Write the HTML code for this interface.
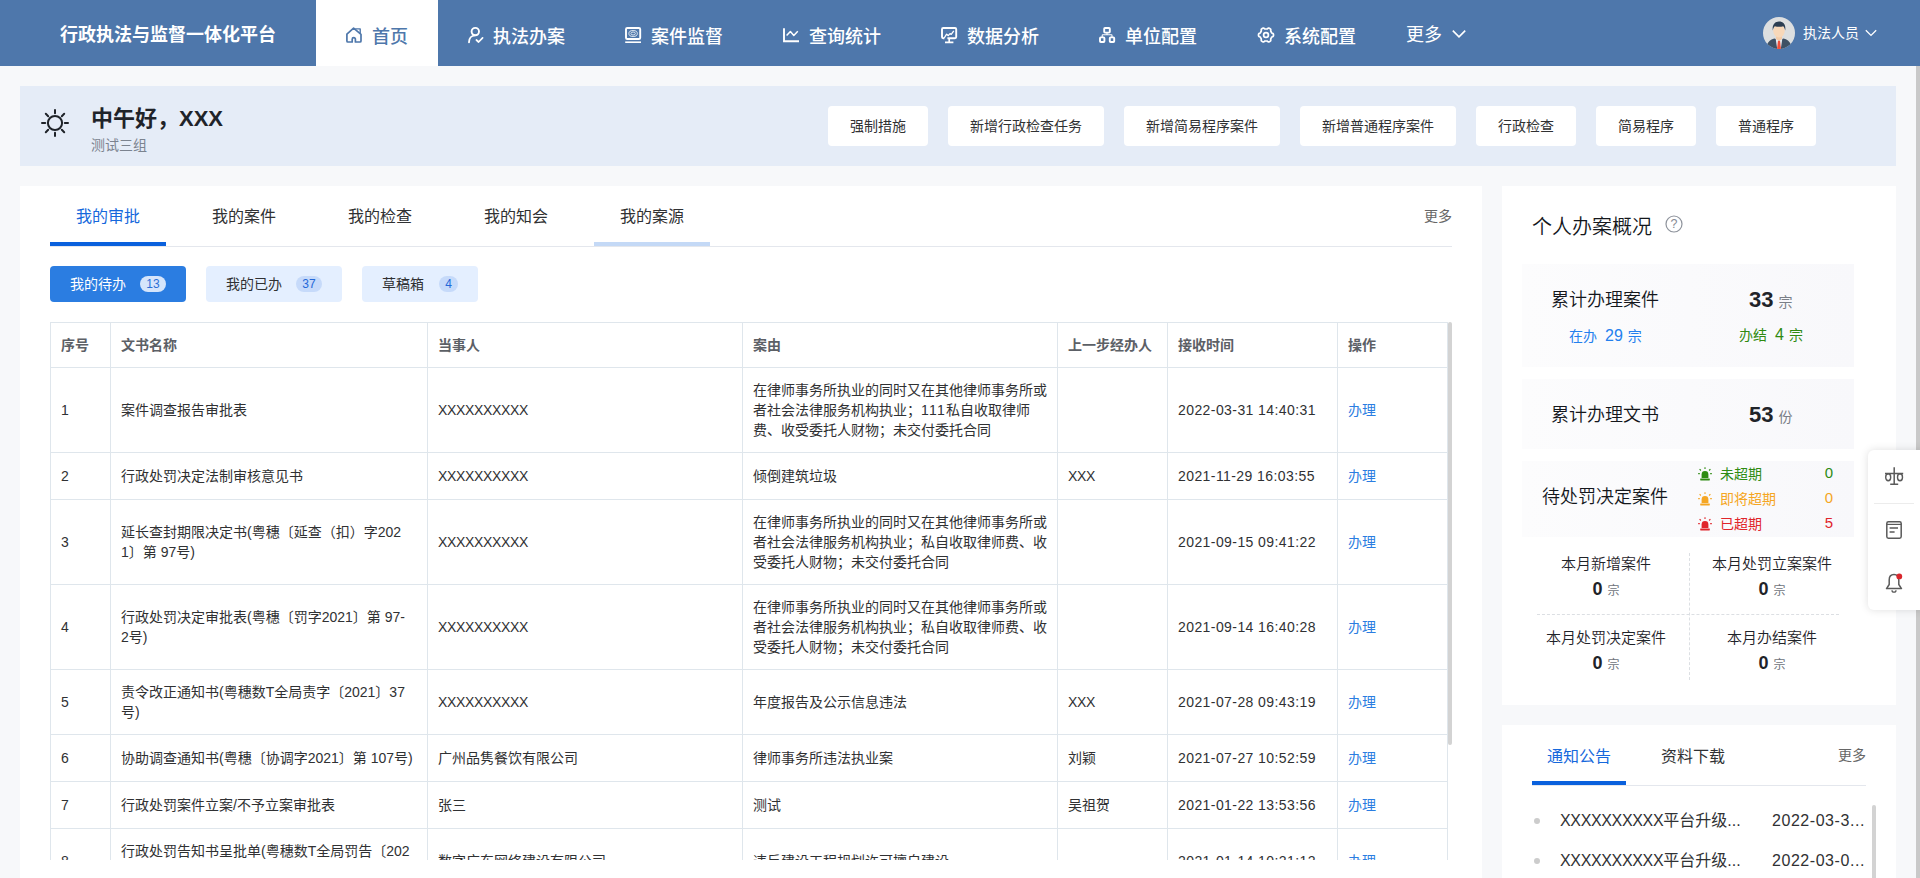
<!DOCTYPE html>
<html lang="zh-CN">
<head>
<meta charset="utf-8">
<title>行政执法与监督一体化平台</title>
<style>
*{box-sizing:border-box;margin:0;padding:0}
html,body{width:1920px;height:878px;overflow:hidden}
body{position:relative;background:#f7f8fa;font-family:"Liberation Sans","Noto Sans CJK SC",sans-serif;color:#303133;font-size:14px}
.abs{position:absolute}
/* header */
#hd{position:absolute;left:0;top:0;width:1920px;height:66px;background:#4e77ab}
#logo{position:absolute;left:60px;top:0;height:66px;line-height:71px;font-size:18px;font-weight:bold;color:#fff;white-space:nowrap}
.nav{position:absolute;top:0;height:66px;line-height:74px;font-size:18px;font-weight:500;color:#fff;white-space:nowrap}
.nav svg{position:absolute;top:27px;width:16px;height:16px;overflow:visible}
.nav.on{background:#fff;color:#4e77ab}
.nav span{position:absolute;top:0}
/* greeting */
#gr{position:absolute;left:20px;top:86px;width:1876px;height:80px;background:#e5ecf7}
#gr h1{position:absolute;left:71px;top:18px;font-size:22px;line-height:30px;font-weight:bold;color:#1f2329;white-space:nowrap}
#gr p{position:absolute;left:71px;top:50px;font-size:14px;line-height:18px;color:#7b838f}
.qb{position:absolute;top:20px;height:40px;line-height:40px;background:#fff;border-radius:4px;text-align:center;font-size:14px;color:#303133}
/* panels */
.pn{position:absolute;background:#fff}
.tab{position:absolute;top:0;height:60px;line-height:62px;font-size:16px;color:#303133;text-align:center;width:116px}
.sub{position:absolute;top:80px;height:36px;line-height:36px;border-radius:4px;background:#e4efff;color:#303133;font-size:14px;padding-left:20px;white-space:nowrap}
.sub i{position:absolute;top:10px;height:16px;line-height:16px;border-radius:8px;background:#c6dafa;color:#2468d8;font-style:normal;font-size:12px;text-align:center}
.sub.on{background:#2b7de1;color:#fff}
.sub.on i{background:#d5e5fb;color:#2b6fd6}

#tb{position:absolute;left:30px;top:0;width:1402px;height:61px;border-bottom:1px solid #e4e7ed}
.ul{position:absolute;top:56px;height:4px}
#tw{position:absolute;left:30px;top:136px;width:1398px;height:538px;overflow:hidden}
table{border-collapse:separate;border-spacing:0;table-layout:fixed;width:1398px;border-left:1px solid #dfe6ec;border-top:1px solid #dfe6ec}
th,td{border-right:1px solid #dfe6ec;border-bottom:1px solid #dfe6ec;padding:0 10px;text-align:left;vertical-align:middle;font-size:14px;line-height:20px;font-weight:normal;color:#303133;word-break:break-all}
th{height:45px;font-weight:bold;color:#5c6066;font-size:14px}
td a{color:#2b7de1;text-decoration:none}
tr.h1 td{height:47px}tr.h2 td{height:65px}tr.h3 td{height:85px}
.x{letter-spacing:-0.35px}.d{letter-spacing:0.42px}

.cd{position:absolute;left:20px;width:332px;background:linear-gradient(90deg,#fcfcfd,#f8f8fb)}
.ct{position:absolute;left:29px;font-size:18px;line-height:24px;color:#14171c;white-space:nowrap;font-weight:350}
.big{position:absolute;left:227px;font-size:22px;line-height:28px;font-weight:bold;color:#1f2329;white-space:nowrap}
.big small{font-size:14px;font-weight:normal;color:#7a7f87;margin-left:5px}
.st{position:absolute;font-size:14px;line-height:20px;white-space:nowrap}
.st b{font-weight:normal;font-size:16px;margin:0 5px 0 8px}
.al{position:absolute;left:175px;width:160px;height:20px;line-height:20px;font-size:14px;white-space:nowrap}
.al svg{position:absolute;left:1px;top:3px}
.al span{position:absolute;left:23px}
.al em{position:absolute;right:24px;top:-1px;font-style:normal;font-size:15px}
.g{position:absolute;width:166px;text-align:center;white-space:nowrap}
.g p{font-size:15px;line-height:20px;color:#1f2329;font-weight:350}
.g div{font-size:18px;line-height:24px;font-weight:bold;color:#1f2329;margin-top:2.500px}
.g small{font-size:12px;font-weight:normal;color:#6e737b;margin-left:5px}
.li{position:absolute;left:30px;width:334px;height:40px;line-height:40px;font-size:16px;color:#303133;white-space:nowrap}
.li:before{content:"";position:absolute;left:2px;top:17px;width:6px;height:6px;border-radius:3px;background:#ccc}
.li span{position:absolute;left:28px}.li em{position:absolute;left:240px;font-style:normal;letter-spacing:0.550px}
</style>
</head>
<body>
<div id="hd">
  <div id="logo">行政执法与监督一体化平台</div>

  <div class="nav on" style="left:316px;width:122px">
    <svg style="left:30px" viewBox="0 0 16 16" width="16" height="16" fill="none" stroke="#4e77ab" stroke-width="1.7" stroke-linejoin="round" stroke-linecap="round"><path d="M7.6 1.2L0.9 7.2V14a1 1 0 0 0 1 1H6.2V12.2a1.6 1.6 0 0 1 3.2 0V15H14a1 1 0 0 0 1-1V7.4Z"/><path d="M9.6 1.9H14.2V6.4" stroke-width="1.4"/></svg>
    <span style="left:56px">首页</span>
  </div>
  <div class="nav" style="left:438px;width:158px">
    <svg style="left:30px" viewBox="0 0 16 16" fill="none" stroke="#fff" stroke-width="1.9" stroke-linecap="round" stroke-linejoin="round"><circle cx="7.3" cy="4.6" r="3.7"/><path d="M1 15.2C1 11.2 3.6 8.6 7 8.4"/><path d="M8.4 13l2.2 2 4-4.2" stroke-width="1.7"/></svg>
    <span style="left:55px">执法办案</span>
  </div>
  <div class="nav" style="left:596px;width:158px">
    <svg style="left:29px" viewBox="0 0 16 16" fill="none" stroke="#fff" stroke-width="1.9"><rect x="1" y="1" width="14.2" height="11" rx="1.3"/><ellipse cx="8.1" cy="6.5" rx="4.2" ry="3" stroke-width="0.8"/><ellipse cx="8.1" cy="6.5" rx="2.2" ry="1.5" stroke-width="0.8"/><path d="M0.2 15.2H16" stroke-width="1.6"/></svg>
    <span style="left:55px">案件监督</span>
  </div>
  <div class="nav" style="left:754px;width:158px">
    <svg style="left:29px" viewBox="0 0 16 16" fill="none" stroke="#fff" stroke-width="1.9"><path d="M1 1.2V14.2H16"/><path d="M3.6 8.6L7.4 4.6L10.8 8.4L14.8 4.2" stroke-width="1.5" stroke-linejoin="round"/></svg>
    <span style="left:55px">查询统计</span>
  </div>
  <div class="nav" style="left:912px;width:158px">
    <svg style="left:29px" viewBox="0 0 16 16" fill="none" stroke="#fff" stroke-width="1.9" stroke-linejoin="round"><path d="M3.4 11.2H2.2a1.2 1.2 0 0 1-1.2-1.2V2.2a1.2 1.2 0 0 1 1.2-1.2H14a1.2 1.2 0 0 1 1.2 1.2V10a1.2 1.2 0 0 1-1.2 1.2H6.4"/><path d="M3.2 11L5.6 7.2L7.2 8.6L9 6.6L10.2 7.4L12.8 3.8" stroke-width="1.3"/><path d="M8.2 11.4V15M4 15.4H12.4" stroke-width="1.7"/></svg>
    <span style="left:55px">数据分析</span>
  </div>
  <div class="nav" style="left:1070px;width:158px">
    <svg style="left:29px" viewBox="0 0 16 16" fill="none" stroke="#fff" stroke-width="1.9" stroke-linejoin="round"><rect x="5.2" y="1" width="5.6" height="4.6" rx="0.8"/><rect x="1" y="10.4" width="4.4" height="4.6" rx="0.8"/><rect x="10.8" y="10.4" width="4.4" height="4.6" rx="0.8"/><path d="M8 5.8V7.8M3.2 10.2V8.4a0.6 0.6 0 0 1 0.6-0.6H12.4a0.6 0.6 0 0 1 0.6 0.6V10.2" stroke-width="1.1"/></svg>
    <span style="left:55px">单位配置</span>
  </div>
  <div class="nav" style="left:1228px;width:158px">
    <svg style="left:29.600px" viewBox="0 0 16 16" fill="none" stroke="#fff" stroke-width="1.7" stroke-linejoin="round"><path d="M15.50 8.00 L15.47 8.65 L15.24 9.28 L14.52 9.75 L13.78 10.10 L13.44 10.54 L13.20 11.00 L12.91 11.44 L12.71 11.95 L12.77 12.77 L12.72 13.63 L12.30 14.14 L11.75 14.50 L11.17 14.80 L10.51 14.91 L9.75 14.52 L9.07 14.06 L8.52 13.98 L8.00 14.00 L7.48 13.98 L6.93 14.06 L6.25 14.52 L5.49 14.91 L4.83 14.80 L4.25 14.50 L3.70 14.14 L3.28 13.63 L3.23 12.77 L3.29 11.95 L3.09 11.44 L2.80 11.00 L2.56 10.54 L2.22 10.10 L1.48 9.75 L0.76 9.28 L0.53 8.65 L0.50 8.00 L0.53 7.35 L0.76 6.72 L1.48 6.25 L2.22 5.90 L2.56 5.46 L2.80 5.00 L3.09 4.56 L3.29 4.05 L3.23 3.23 L3.28 2.37 L3.70 1.86 L4.25 1.50 L4.83 1.20 L5.49 1.09 L6.25 1.48 L6.93 1.94 L7.48 2.02 L8.00 2.00 L8.52 2.02 L9.07 1.94 L9.75 1.48 L10.51 1.09 L11.17 1.20 L11.75 1.50 L12.30 1.86 L12.72 2.37 L12.77 3.23 L12.71 4.05 L12.91 4.56 L13.20 5.00 L13.44 5.46 L13.78 5.90 L14.52 6.25 L15.24 6.72 L15.47 7.35Z"/><circle cx="8" cy="8" r="2.4"/></svg>
    <span style="left:56px">系统配置</span>
  </div>
  <div class="nav" style="left:1386px;width:100px;line-height:70px;font-weight:400">
    <span style="left:20px">更多</span>
    <svg style="left:66px;top:29px;width:14px;height:10px" viewBox="0 0 14 10" fill="none" stroke="#fff" stroke-width="1.6"><path d="M0.8 1.6L7 7.8L13.2 1.6"/></svg>
  </div>

  <svg class="abs" style="left:1763px;top:17px" width="32" height="32" viewBox="0 0 32 32"><defs><clipPath id="av"><circle cx="16" cy="16" r="16"/></clipPath></defs><g clip-path="url(#av)"><rect width="32" height="32" fill="#dddfe0"/><path d="M3.5 32c0-6 3-9.5 8-10.5l4.5 1.5 4.5-1.500c5 1 8 4.500 8 10.500Z" fill="#3f5165"/><path d="M12.600 21.300l3.400 2 3.400-2L17.800 32H14.200Z" fill="#e8eef5"/><path d="M15 23.500h2l1 8.500h-4Z" fill="#f04f3a"/><path d="M13 17h6v5.200l-3 1.800-3-1.800Z" fill="#f3cba8"/><ellipse cx="16" cy="13.800" rx="5.800" ry="6.600" fill="#f8d8b9"/><path d="M9.800 13.500c-0.800-5.500 2-9 6.200-9 4.600 0 7 3.300 6.200 9-0.400-2-1-3.400-2-4.300-2.500 0.800-6 0.600-8.400 0-1 0.900-1.700 2.300-2 4.300Z" fill="#2c3e52"/></g></svg>
  <div class="abs" style="left:1803px;top:0;height:66px;line-height:66px;font-size:14px;color:#fff;white-space:nowrap">执法人员</div>
  <svg class="abs" style="left:1865px;top:29px" width="12" height="8" viewBox="0 0 12 8" fill="none" stroke="#fff" stroke-width="1.300"><path d="M0.800 1.200L6 6.400L11.200 1.200"/></svg>
</div>
<div id="gr">
  <h1>中午好，XXX</h1>
  <p>测试三组</p>

  <svg class="abs" style="left:20px;top:22px" width="30" height="30" viewBox="0 0 30 30" fill="none" stroke="#1f2329" stroke-width="2" stroke-linecap="round"><circle cx="15" cy="15" r="7.100"/><path d="M15 2v3.200M15 24.800V28M2 15h3.200M24.800 15H28M5.800 5.800l2.400 2.400M21.800 21.800l2.400 2.400M5.800 24.200l2.400-2.400M21.800 8.200l2.400-2.400"/></svg>
  <div class="qb" style="left:808px;width:100px">强制措施</div>
  <div class="qb" style="left:928px;width:156px">新增行政检查任务</div>
  <div class="qb" style="left:1104px;width:156px">新增简易程序案件</div>
  <div class="qb" style="left:1280px;width:156px">新增普通程序案件</div>
  <div class="qb" style="left:1456px;width:100px">行政检查</div>
  <div class="qb" style="left:1576px;width:100px">简易程序</div>
  <div class="qb" style="left:1696px;width:100px">普通程序</div>
</div>
<div class="pn" id="lp" style="left:20px;top:186px;width:1462px;height:692px">
  <div id="tb">
    <div class="tab" style="left:0;color:#1668dc">我的审批</div>
    <div class="tab" style="left:136px">我的案件</div>
    <div class="tab" style="left:272px">我的检查</div>
    <div class="tab" style="left:408px">我的知会</div>
    <div class="tab" style="left:544px">我的案源</div>
    <div class="ul" style="left:0;width:116px;background:#0a61dd"></div>
    <div class="ul" style="left:544px;width:116px;background:#c4d9f6"></div>
    <div class="abs" style="right:0;top:0;line-height:60px;font-size:14px;color:#666">更多</div>
  </div>
  <div class="sub on" style="left:30px;width:136px">我的待办<i style="left:90px;width:26px">13</i></div>
  <div class="sub" style="left:186px;width:136px">我的已办<i style="left:90px;width:26px">37</i></div>
  <div class="sub" style="left:342px;width:116px">草稿箱<i style="left:77px;width:19px">4</i></div>
  <div id="tw"><table>
  <colgroup><col style="width:60px"><col style="width:317px"><col style="width:315px"><col style="width:315px"><col style="width:110px"><col style="width:170px"><col style="width:110px"></colgroup>
  <tr><th>序号</th><th>文书名称</th><th>当事人</th><th>案由</th><th>上一步经办人</th><th>接收时间</th><th>操作</th></tr>
<tr class="h3"><td>1</td><td>案件调查报告审批表</td><td><span class="x">XXXXXXXXXX</span></td><td>在律师事务所执业的同时又在其他律师事务所或者社会法律服务机构执业；<span style="letter-spacing:1.200px">111</span>私自收取律师费、收受委托人财物；未交付委托合同</td><td></td><td><span class="d">2022-03-31 14:40:31</span></td><td><a>办理</a></td></tr>
<tr class="h1"><td>2</td><td>行政处罚决定法制审核意见书</td><td><span class="x">XXXXXXXXXX</span></td><td>倾倒建筑垃圾</td><td><span class="x">XXX</span></td><td><span class="d">2021-11-29 16:03:55</span></td><td><a>办理</a></td></tr>
<tr class="h3"><td>3</td><td>延长查封期限决定书(粤穗〔延查（扣）字202<br>1〕第 97号)</td><td><span class="x">XXXXXXXXXX</span></td><td>在律师事务所执业的同时又在其他律师事务所或者社会法律服务机构执业；私自收取律师费、收受委托人财物；未交付委托合同</td><td></td><td><span class="d">2021-09-15 09:41:22</span></td><td><a>办理</a></td></tr>
<tr class="h3"><td>4</td><td>行政处罚决定审批表(粤穗〔罚字2021〕第 97-<br>2号)</td><td><span class="x">XXXXXXXXXX</span></td><td>在律师事务所执业的同时又在其他律师事务所或者社会法律服务机构执业；私自收取律师费、收受委托人财物；未交付委托合同</td><td></td><td><span class="d">2021-09-14 16:40:28</span></td><td><a>办理</a></td></tr>
<tr class="h2"><td>5</td><td>责令改正通知书(粤穗数T全局责字〔2021〕37<br>号)</td><td><span class="x">XXXXXXXXXX</span></td><td>年度报告及公示信息违法</td><td><span class="x">XXX</span></td><td><span class="d">2021-07-28 09:43:19</span></td><td><a>办理</a></td></tr>
<tr class="h1"><td>6</td><td>协助调查通知书(粤穗〔协调字2021〕第 107号)</td><td>广州品隽餐饮有限公司</td><td>律师事务所违法执业案</td><td>刘颖</td><td><span class="d">2021-07-27 10:52:59</span></td><td><a>办理</a></td></tr>
<tr class="h1"><td>7</td><td>行政处罚案件立案/不予立案审批表</td><td>张三</td><td>测试</td><td>吴祖贺</td><td><span class="d">2021-01-22 13:53:56</span></td><td><a>办理</a></td></tr>
<tr class="h2"><td>8</td><td>行政处罚告知书呈批单(粤穗数T全局罚告〔202<br>1〕21号)</td><td>数字广东网络建设有限公司</td><td>违反建设工程规划许可擅自建设</td><td></td><td><span class="d">2021-01-14 10:21:12</span></td><td><a>办理</a></td></tr>
  </table></div>
  <div class="abs" style="left:1428px;top:136px;width:4px;height:423px;background:#d3d3d3;border-radius:2px"></div>
</div>
<div class="pn" id="rp1" style="left:1502px;top:186px;width:394px;height:519px">
  <div class="abs" style="left:30px;top:27px;font-size:20px;line-height:28px;color:#14171c;font-weight:350">个人办案概况</div>
  <svg class="abs" style="left:163.400px;top:29.200px" width="18" height="18" viewBox="0 0 18 18" fill="none" stroke="#8d929b" stroke-width="1.200"><circle cx="9" cy="9" r="8"/><text x="9" y="13.200" text-anchor="middle" font-size="12.500" font-family="Liberation Sans, sans-serif" fill="#858a93" stroke="none">?</text></svg>
  <div class="cd" style="top:78px;height:103px">
    <div class="ct" style="top:24px">累计办理案件</div>
    <div class="big" style="top:22px">33<small>宗</small></div>
    <div class="st" style="left:47px;top:62px;color:#2380ee">在办<b>29</b>宗</div>
    <div class="st" style="left:217px;top:61px;color:#2f8a10">办结<b>4</b>宗</div>
  </div>
  <div class="cd" style="top:193px;height:70px">
    <div class="ct" style="top:24px">累计办理文书</div>
    <div class="big" style="top:22px">53<small>份</small></div>
  </div>
  <div class="cd" style="top:275px;height:76px">
    <div class="ct" style="left:20px;top:24px">待处罚决定案件</div>
    <div class="al" style="top:3px;color:#2e8b12"><svg width="14" height="14" viewBox="0 0 14 14" fill="#2e8b12" stroke="#2e8b12"><path d="M3.600 11V7.400a3.400 3.400 0 0 1 6.800 0V11Z" stroke="none"/><rect x="2.200" y="11.400" width="9.600" height="2" rx="0.400" stroke="none"/><path d="M7 0.200V2M1.600 2.200l1.300 1.300M12.400 2.200l-1.300 1.300M0.200 6.600H1.800M12.200 6.600h1.600" stroke-width="1.100" fill="none"/></svg><span>未超期</span><em>0</em></div>
    <div class="al" style="top:28px;color:#f5a623"><svg width="14" height="14" viewBox="0 0 14 14" fill="#f5a623" stroke="#f5a623"><path d="M3.600 11V7.400a3.400 3.400 0 0 1 6.800 0V11Z" stroke="none"/><rect x="2.200" y="11.400" width="9.600" height="2" rx="0.400" stroke="none"/><path d="M7 0.200V2M1.600 2.200l1.300 1.300M12.400 2.200l-1.300 1.300M0.200 6.600H1.800M12.200 6.600h1.600" stroke-width="1.100" fill="none"/></svg><span>即将超期</span><em>0</em></div>
    <div class="al" style="top:53px;color:#e0252b"><svg width="14" height="14" viewBox="0 0 14 14" fill="#e0252b" stroke="#e0252b"><path d="M3.600 11V7.400a3.400 3.400 0 0 1 6.800 0V11Z" stroke="none"/><rect x="2.200" y="11.400" width="9.600" height="2" rx="0.400" stroke="none"/><path d="M7 0.200V2M1.600 2.200l1.300 1.300M12.400 2.200l-1.300 1.300M0.200 6.600H1.800M12.200 6.600h1.600" stroke-width="1.100" fill="none"/></svg><span>已超期</span><em>5</em></div>
  </div>
  <div class="g" style="left:21px;top:368px"><p>本月新增案件</p><div>0<small>宗</small></div></div>
  <div class="g" style="left:187px;top:368px"><p>本月处罚立案案件</p><div>0<small>宗</small></div></div>
  <div class="g" style="left:21px;top:442px"><p>本月处罚决定案件</p><div>0<small>宗</small></div></div>
  <div class="g" style="left:187px;top:442px"><p>本月办结案件</p><div>0<small>宗</small></div></div>
  <div class="abs" style="left:187px;top:367px;width:0;height:127px;border-left:1px dashed #dcdfe3"></div>
  <div class="abs" style="left:35px;top:428px;width:302px;height:0;border-top:1px dashed #dcdfe3"></div>
</div>
<div class="pn" id="rp2" style="left:1502px;top:725px;width:394px;height:153px;overflow:hidden">
  <div class="abs" style="left:30px;top:0;width:334px;height:61px;border-bottom:1px solid #e4e7ed"></div>
  <div class="abs" style="left:30px;top:56px;width:94px;height:4px;background:#0a61dd"></div>
  <div class="abs" style="left:45px;top:0;line-height:63px;font-size:16px;color:#1668dc">通知公告</div>
  <div class="abs" style="left:159px;top:0;line-height:63px;font-size:16px;color:#303133">资料下载</div>
  <div class="abs" style="left:336px;top:0;line-height:60px;font-size:14px;color:#666">更多</div>
  <div class="li" style="top:76px"><span><span class="x" style="position:static">XXXXXXXXXX</span>平台升级...</span><em>2022-03-3...</em></div>
  <div class="li" style="top:116px"><span><span class="x" style="position:static">XXXXXXXXXX</span>平台升级...</span><em>2022-03-0...</em></div>
  <div class="abs" style="left:370px;top:80px;width:4px;height:80px;background:#d3d3d3;border-radius:2px"></div>
</div>

<div id="ft" class="abs" style="left:1868px;top:450px;width:60px;height:160px;background:#fff;border-radius:6px 0 0 6px;box-shadow:0 0 9px rgba(0,0,0,0.13);z-index:5">
  <svg class="abs" style="left:16px;top:16px" width="20" height="20" viewBox="0 0 20 20" fill="none" stroke="#5a5a5a" stroke-width="1.500"><path d="M10.200 1.200V18M6.200 18.200H14.200M1 7.600H19.200"/><ellipse cx="4.200" cy="11.300" rx="2.500" ry="3.500" stroke-width="1.400"/><ellipse cx="16" cy="11.300" rx="2.500" ry="3.500" stroke-width="1.400"/></svg>
  <div class="abs" style="left:6px;top:53px;width:40px;height:1px;background:#ececec"></div>
  <svg class="abs" style="left:18px;top:71px" width="16" height="18" viewBox="0 0 16 18" fill="none" stroke="#5a5a5a" stroke-width="1.500"><rect x="0.800" y="0.800" width="14.400" height="16.400" rx="1.600"/><path d="M0.800 3.400H15.200" stroke-width="1.200"/><path d="M3.600 7H12M3.600 11H8.600" stroke-width="1.300"/></svg>
  <svg class="abs" style="left:17px;top:122px" width="18" height="21" viewBox="0 0 18 21" fill="none" stroke="#5a5a5a" stroke-width="1.500" stroke-linejoin="round"><path d="M9 2.600C5.600 2.600 4.200 5.200 4.200 8V12.500L1.500 16.600H16.500L13.800 12.500V8C13.800 5.200 12.400 2.600 9 2.600Z"/><path d="M7 18.200a2 2 0 0 0 4 0" stroke-width="1.300"/><circle cx="14.300" cy="4.400" r="2.900" fill="#d9262c" stroke="none"/></svg>
</div>
<div id="sb" class="abs" style="left:1916px;top:66px;width:4px;height:812px;background:#c9c9c9"></div>
</body>
</html>
